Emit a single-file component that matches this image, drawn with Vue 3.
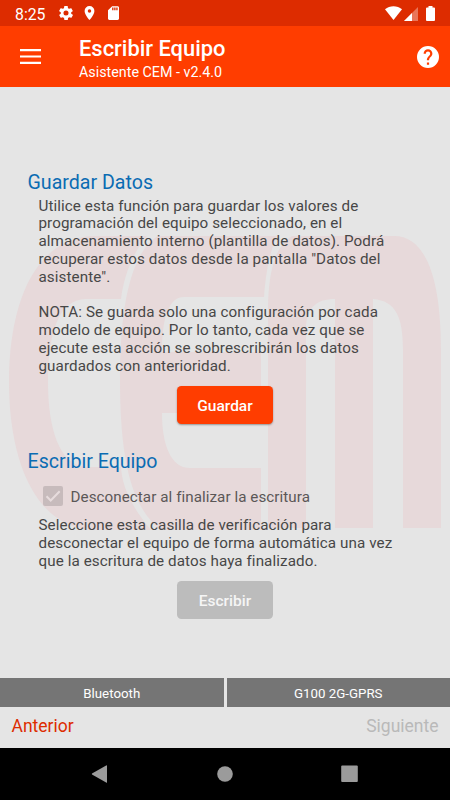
<script setup>
import { ref } from 'vue'

const disconnect = ref(true)
const saveLines = [
  'Utilice esta función para guardar los valores de',
  'programación del equipo seleccionado, en el',
  'almacenamiento interno (plantilla de datos). Podrá',
  'recuperar estos datos desde la pantalla "Datos del',
  'asistente".',
  '',
  'NOTA: Se guarda solo una configuración por cada',
  'modelo de equipo. Por lo tanto, cada vez que se',
  'ejecute esta acción se sobrescribirán los datos',
  'guardados con anterioridad.',
].join('\n')
const writeLines = [
  'Seleccione esta casilla de verificación para',
  'desconectar el equipo de forma automática una vez',
  'que la escritura de datos haya finalizado.',
].join('\n')
</script>

<template>
  <div class="screen">
    <div class="status">
      <span class="clock">8:25</span>
      <svg class="gear" viewBox="2 2 20 20"><path d="M19.4 13a7.5 7.5 0 0 0 0-2l2.1-1.6a.5.5 0 0 0 .1-.7l-2-3.4a.5.5 0 0 0-.6-.2l-2.5 1a7.300 7.300 0 0 0-1.700-1L14.500 2.400a.5.5 0 0 0-.5-.4h-4a.5.5 0 0 0-.5.4l-.4 2.700a7.300 7.300 0 0 0-1.700 1l-2.500-1a.5.5 0 0 0-.6.2l-2 3.400a.5.5 0 0 0 .1.700L4.600 11a7.500 7.500 0 0 0 0 2l-2.100 1.600a.5.5 0 0 0-.1.700l2 3.400c.1.200.4.300.6.200l2.500-1a7.300 7.300 0 0 0 1.700 1l.4 2.700c0 .2.200.4.500.4h4c.300 0 .5-.2.500-.4l.4-2.700a7.300 7.300 0 0 0 1.700-1l2.500 1c.2.100.5 0 .6-.2l2-3.400a.5.5 0 0 0-.1-.7zM12 15.600a3.600 3.600 0 1 1 0-7.200 3.600 3.600 0 0 1 0 7.200z" /></svg>
      <svg class="pin" viewBox="5 2 14 20"><path d="M12 2a7 7 0 0 0-7 7c0 5.250 7 13 7 13s7-7.750 7-13a7 7 0 0 0-7-7zm0 9.500a2.500 2.500 0 1 1 0-5 2.500 2.500 0 0 1 0 5z" /></svg>
      <svg class="sd" viewBox="4 2 16 20"><path d="M18 2h-8L4 8v12c0 1.100.9 2 2 2h12c1.100 0 2-.9 2-2V4c0-1.100-.9-2-2-2zm-6 6h-2V4h2zm3 0h-2V4h2zm3 0h-2V4h2z" /></svg>
      <span class="spacer"></span>
      <svg class="wifi" viewBox="0 0 17 14"><path d="M0 3.200C4.800-.9 12.200-.9 17 3.200L8.500 14z" /></svg>
      <svg class="signal" viewBox="0 0 14 14"><path class="faint" d="M14 0v14H0z" /><path d="M8 6v8H0z" /></svg>
      <svg class="battery" viewBox="0 0 9 15"><path d="M2.500 0h4v1.500H8a1 1 0 0 1 1 1V14a1 1 0 0 1-1 1H1a1 1 0 0 1-1-1V2.500a1 1 0 0 1 1-1h1.500z" /></svg>
    </div>

    <header class="appbar">
      <svg class="menu" viewBox="0 0 21 15"><path d="M0 0h21v2.200H0zM0 6.400h21v2.200H0zM0 12.800h21V15H0z" /></svg>
      <div class="titles">
        <div class="title">Escribir Equipo</div>
        <div class="subtitle">Asistente CEM - v2.4.0</div>
      </div>
      <svg class="help" viewBox="2 2 20 20"><path d="M12 2a10 10 0 1 0 0 20 10 10 0 0 0 0-20zm1 17h-2v-2h2zm2.070-7.750-.9.920C13.450 12.900 13 13.500 13 15h-2v-.5c0-1.100.45-2.100 1.170-2.830l1.240-1.260c.37-.36.590-.86.590-1.410a2 2 0 0 0-4 0H8a4 4 0 0 1 8 0c0 .88-.36 1.680-.93 2.250z" /></svg>
    </header>

    <main class="content">
      <svg class="watermark" viewBox="0 87 450 591">
        <path d="M147 236H96C37 236 9 300 9 382C9 465 38 530 96 530H151C129 504 122 484 121 467H88C58 467 48 425 48 382C48 335 58 299 86 299H121C124 276 132 254 147 236Z" />
        <path d="M277 236H158C129 254 120 312 120 380C120 455 130 507 161 530H261V468H190C171 468 162 445 162 413H261V352H162C162 320 168 297 184 297H264C266 272 269 254 277 236Z" />
        <path d="M292 236H394C428 236 441 284 441 350V528H403V350C403 317 396 301 373 299V528H335V299C317 299 306 307 306 330V528H268V310C268 273 275 246 292 236Z" />
      </svg>

      <section class="save">
        <h2>Guardar Datos</h2>
        <p>{{ saveLines }}</p>
        <button class="btn primary">Guardar</button>
      </section>

      <section class="write">
        <h2>Escribir Equipo</h2>
        <div class="check">
          <span class="box"><svg v-if="disconnect" viewBox="0 0 20 20"><path d="M3.500 10.300l4.200 4.200L16.700 5.300" /></svg></span>
          <span>Desconectar al finalizar la escritura</span>
        </div>
        <p>{{ writeLines }}</p>
        <button class="btn disabled" disabled>Escribir</button>
      </section>
    </main>

    <div class="tabs">
      <div class="tab">Bluetooth</div>
      <div class="tab">G100 2G-GPRS</div>
    </div>
    <div class="pager">
      <span class="prev">Anterior</span>
      <span class="next">Siguiente</span>
    </div>
    <nav class="sysnav">
      <svg viewBox="0 0 18 18"><path d="M16 .4v17.200Q16 18 15.600 17.800L1 9.400Q.6 9 1 8.600L15.600 .2Q16 0 16 .4z" /></svg>
      <svg viewBox="0 0 18 18"><circle cx="9" cy="9" r="7.800" /></svg>
      <svg viewBox="0 0 18 18"><rect x=".2" y=".5" width="16.600" height="16.600" rx="1" /></svg>
    </nav>
  </div>
</template>

<style>
body {
  margin: 0;
}
</style>

<style scoped>
.screen {
  width: 450px;
  height: 800px;
  display: flex;
  flex-direction: column;
  background: #e5e5e5;
  font-family: Roboto, sans-serif;
  overflow: hidden;
}
svg {
  display: block;
  fill: #fff;
  flex: none;
}
.status {
  height: 26px;
  box-sizing: border-box;
  display: flex;
  align-items: center;
  padding: 0 15.500px 0 15px;
  background: #dd2c00;
  color: #fff;
}
.clock {
  width: 43.500px;
  font-size: 15.800px;
  line-height: 26px;
  padding-top: 3px;
}
.gear { width: 14px; height: 14px; }
.pin { width: 11px; height: 14px; margin-left: 11.500px; }
.sd { width: 11px; height: 14px; margin-left: 13px; }
.spacer { flex: 1; }
.wifi { width: 17px; height: 14px; }
.signal { width: 14px; height: 14px; margin: 1px 8px 0 2px; }
.battery { width: 9px; height: 15px; }
.faint { opacity: .35; }
.appbar {
  height: 61px;
  display: flex;
  align-items: center;
  padding: 0 11px 0 20px;
  background: #ff3d00;
  color: #fff;
}
.menu { width: 21px; height: 15px; }
.titles { margin-left: 38px; flex: 1; padding-top: 4px; }
.title {
  font-size: 21.900px;
  line-height: 25px;
  font-weight: 500;
}
.subtitle {
  font-size: 14.300px;
  line-height: 20px;
  margin-top: 1px;
}
.help { width: 22px; height: 22px; }
.content {
  height: 591px;
  box-sizing: border-box;
  padding: 83px 28px 0;
  position: relative;
}
.watermark {
  position: absolute;
  inset: 0;
  width: 450px;
  height: 591px;
  fill: #e7d9da;
}
section {
  position: relative;
  display: flex;
  flex-direction: column;
}
h2 {
  margin: 0 0 0 -.5px;
  font-size: 19.600px;
  line-height: 26px;
  font-weight: 400;
  color: #0b6cb3;
}
p {
  margin: 1.500px 0 0 10.500px;
  font-size: 15.200px;
  line-height: 17.800px;
  letter-spacing: .085px;
  color: #474747;
  white-space: pre;
}
.btn {
  width: 96px;
  height: 38px;
  margin: 10.500px 0 0 149px;
  padding: 2px 0 0;
  border: 0;
  border-radius: 4.500px;
  font: 500 15.500px Roboto, sans-serif;
  color: #fff;
}
.primary {
  background: #ff3d00;
  box-shadow: 0 1px 2px rgba(0, 0, 0, .35);
}
.disabled {
  background: #bcbcbc;
  color: #f5f5f5;
}
.write { margin-top: 25px; }
.check {
  display: flex;
  align-items: center;
  height: 20px;
  margin: 11px 0 10px 15px;
  gap: 7.500px;
  font-size: 15.200px;
  letter-spacing: .06px;
  line-height: 20px;
  color: #5b5757;
}
.box {
  width: 20px;
  height: 20px;
  border-radius: 2px;
  background: #c7bbbc;
}
.box + span { padding-top: 2px; }
.box svg {
  fill: none;
  stroke: #e7dcdd;
  stroke-width: 2;
}
.tabs {
  height: 29px;
  display: grid;
  grid-template-columns: 1fr 1fr;
  gap: 3px;
}
.tab {
  background: #757575;
  color: #fff;
  font-size: 13.300px;
  line-height: 31px;
  height: 29px;
  text-align: center;
}
.pager {
  height: 41px;
  box-sizing: border-box;
  display: flex;
  justify-content: space-between;
  padding: 0 11.500px;
  font-size: 17.500px;
  line-height: 38px;
}
.prev { color: #dd2c00; }
.next { color: #b9b9b9; }
.sysnav {
  flex: 1;
  display: flex;
  justify-content: center;
  align-items: center;
  gap: 107px;
  background: #000;
}
.sysnav svg {
  width: 18px;
  height: 18px;
  fill: #9b9b9b;
}
</style>
